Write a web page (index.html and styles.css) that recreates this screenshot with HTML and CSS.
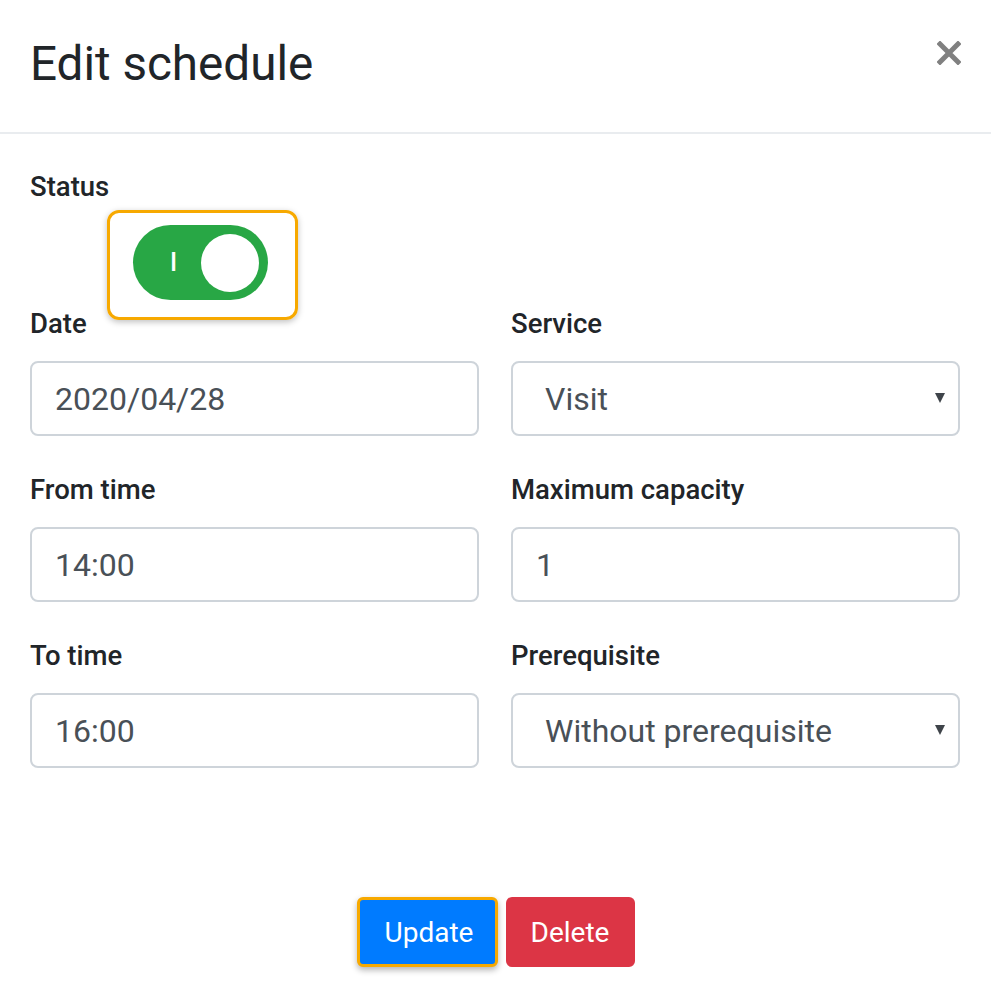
FILE: index.html
```html
<!DOCTYPE html>
<html>
<head>
<meta charset="utf-8">
<link rel="stylesheet" href="styles.css">
</head>
<body>
<div class="modal">
  <div class="modal-header">
    <h1 class="title">Edit schedule</h1>
    <button class="close" aria-label="Close">
      <svg width="24" height="24" viewBox="0 0 24 24"><path d="M3 3 L21 21 M21 3 L3 21" stroke="#808080" stroke-width="5" stroke-linecap="square"/></svg>
    </button>
  </div>
  <div class="modal-body">
    <label class="label">Status</label>
    <div class="toggle-row">
      <div class="toggle">
        <span class="toggle-on">I</span>
        <span class="knob"></span>
      </div>
    </div>
    <div class="grid">
      <div class="field">
        <label class="label">Date</label>
        <input class="input" value="2020/04/28">
      </div>
      <div class="field">
        <label class="label">Service</label>
        <div class="select-wrap"><select class="input select"><option>Visit</option></select></div>
      </div>
      <div class="field">
        <label class="label">From time</label>
        <input class="input" value="14:00">
      </div>
      <div class="field">
        <label class="label">Maximum capacity</label>
        <input class="input" value="1">
      </div>
      <div class="field">
        <label class="label">To time</label>
        <input class="input" value="16:00">
      </div>
      <div class="field">
        <label class="label">Prerequisite</label>
        <div class="select-wrap"><select class="input select"><option>Without prerequisite</option></select></div>
      </div>
    </div>
  </div>
  <div class="modal-footer">
    <button class="btn btn-primary">Update</button>
    <button class="btn btn-danger">Delete</button>
  </div>
</div>
</body>
</html>
```
FILE: styles.css
```css
* { box-sizing: border-box; }
html, body { margin: 0; padding: 0; background: #fff; }
body { font-family: Roboto, "Liberation Sans", sans-serif; color: #212529; width: 991px; height: 998px; overflow: hidden; }
.modal { width: 991px; }
.modal-header {
  height: 134px;
  padding: 0 30px;
  display: flex;
  align-items: center;
  justify-content: space-between;
  border-bottom: 2px solid #e9ecef;
}
.title { margin: 0; font-size: 47.6px; font-weight: 400; line-height: 1; color: #212529; position: relative; top: -1px; }
.close { border: 0; background: none; padding: 0; width: 24px; height: 24px; position: relative; top: -13px; cursor: pointer; }
.close svg { display: block; }
.modal-body { padding: 35px 30px 0; }
.label { display: block; font-size: 27.5px; font-weight: 500; line-height: 36px; color: #212529; }
.toggle-row { margin-top: 20px; padding-left: 103px; height: 81px; }
.toggle {
  position: relative;
  width: 135px; height: 75px;
  border-radius: 38px;
  background: #28a745;
  display: flex; align-items: center;
}
.toggle::after {
  content: "";
  position: absolute;
  left: -26px; top: -15px; right: -30px; bottom: -20px;
  border: 3px solid #f7a900;
  border-radius: 12px;
  box-shadow: 0 2px 6px rgba(0,0,0,0.25);
}
.toggle-on { color: #fff; font-size: 25px; font-weight: 500; margin-left: 37px; line-height: 1; }
.knob { position: absolute; right: 9px; top: 8.5px; width: 58px; height: 58px; border-radius: 50%; background: #fff; }
.grid { display: grid; grid-template-columns: 449px 449px; column-gap: 32px; row-gap: 36px; }
.field .label { margin-bottom: 19px; }
.input {
  display: block;
  width: 100%;
  height: 75px;
  border: 2px solid #ced4da;
  border-radius: 8px;
  padding: 0 23px;
  font-family: Roboto, "Liberation Sans", sans-serif;
  font-size: 32px;
  color: #495057;
  background: #fff;
  outline: none;
}
.select { appearance: none; -webkit-appearance: none; padding-left: 32px; }
.select-wrap { position: relative; }
.select-wrap::after {
  content: "";
  position: absolute;
  right: 15px; top: 32px;
  border-left: 5px solid transparent;
  border-right: 5px solid transparent;
  border-top: 10px solid #3f444a;
}
.modal-footer { display: flex; justify-content: center; gap: 8px; margin-top: 129px; }
.btn {
  font-family: Roboto, "Liberation Sans", sans-serif;
  font-size: 28px;
  font-weight: 400;
  color: #fff;
  height: 70px;
  border-radius: 6px;
  border: 0;
  padding: 0 25px;
}
.btn-primary { background: #007bff; border: 3px solid #f7a900; width: 141px; box-shadow: 0 3px 6px rgba(0,0,0,0.3); }
.btn-danger { background: #dc3545; width: 129px; }
```
